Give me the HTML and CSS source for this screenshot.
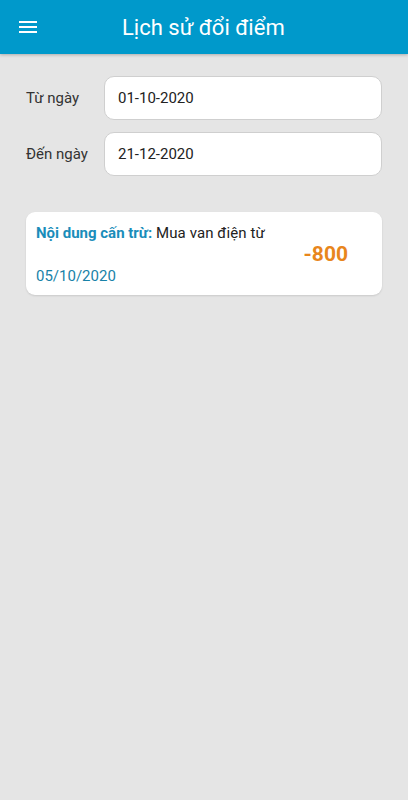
FILE: index.html
```html
<!DOCTYPE html>
<html lang="vi">
<head>
<meta charset="utf-8">
<link rel="stylesheet" href="styles.css">
</head>
<body>
<header class="topbar">
  <button class="menu-btn" aria-label="menu">
    <svg width="18" height="12" viewBox="0 0 18 12"><rect x="0" y="0" width="18" height="2" fill="#fff"/><rect x="0" y="5" width="18" height="2" fill="#fff"/><rect x="0" y="10" width="18" height="2" fill="#fff"/></svg>
  </button>
  <h1 class="title">Lịch sử đổi điểm</h1>
</header>
<main class="content">
  <div class="filter-row">
    <span class="filter-label">Từ ngày</span>
    <div class="date-box">01-10-2020</div>
  </div>
  <div class="filter-row">
    <span class="filter-label">Đến ngày</span>
    <div class="date-box">21-12-2020</div>
  </div>
  <div class="card">
    <div class="card-main">
      <div class="card-desc"><b class="card-key">Nội dung cấn trừ:</b> Mua van điện từ</div>
      <div class="card-date">05/10/2020</div>
    </div>
    <div class="card-points">-800</div>
  </div>
</main>
</body>
</html>
```
FILE: styles.css
```css
* { box-sizing: border-box; }
html, body { margin: 0; padding: 0; }
body {
  background: #e5e5e5;
  font-family: Roboto, "Noto Sans", sans-serif;
  width: 408px;
  min-height: 800px;
}
.topbar {
  height: 54px;
  background: #0099cb;
  display: flex;
  align-items: center;
  box-shadow: 0 1px 3px rgba(0,0,0,0.25);
}
.menu-btn {
  background: none;
  border: none;
  padding: 0;
  margin-left: 19px;
  width: 18px;
  height: 12px;
  display: flex;
}
.title {
  margin: 0 0 0 85px;
  font-size: 22px;
  font-weight: 400;
  color: #fff;
}
.content {
  padding: 22px 26px 0 26px;
}
.filter-row {
  display: flex;
  align-items: center;
  margin-bottom: 12px;
}
.filter-label {
  width: 78px;
  font-size: 15px;
  color: #333;
}
.date-box {
  flex: 1;
  height: 44px;
  background: #fff;
  border: 1px solid #cfcfcf;
  border-radius: 10px;
  display: flex;
  align-items: center;
  padding-left: 13px;
  font-size: 15px;
  color: #222;
}
.card {
  margin-top: 36px;
  background: #fff;
  border-radius: 9px;
  height: 83px;
  display: flex;
  box-shadow: 0 1px 2px rgba(0,0,0,0.12);
}
.card-main {
  flex: 1;
  padding: 12px 0 0 10px;
  display: flex;
  flex-direction: column;
}
.card-desc {
  font-size: 15px;
  color: #222;
  letter-spacing: 0.1px;
}
.card-key {
  color: #1a8dba;
  font-weight: 700;
  letter-spacing: 0;
}
.card-date {
  margin-top: 25px;
  font-size: 15px;
  color: #1882a8;
}
.card-points {
  align-self: center;
  margin-right: 34px;
  font-size: 21px;
  font-weight: 700;
  color: #e8861c;
}
```
